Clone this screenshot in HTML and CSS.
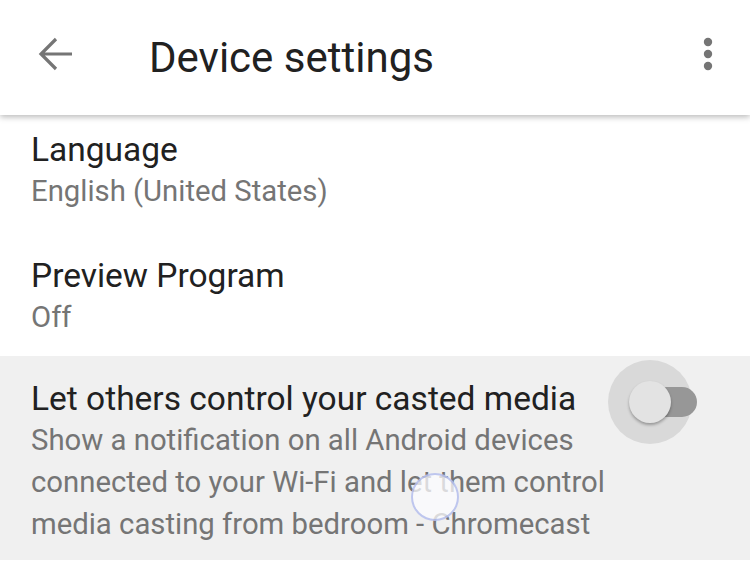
FILE: index.html
```html
<!DOCTYPE html>
<html lang="en">
<head>
    <meta charset="UTF-8">
    <title>Device settings</title>
    <link rel="stylesheet" href="styles.css">
</head>
<body>
<div class="toolbar">
    <svg class="back" width="36" height="36" viewBox="0 0 36 36">
        <path d="M34 18H5M18 3L3 18l15 15" fill="none" stroke="#757575" stroke-width="3.2"/>
    </svg>
    <h1 class="title">Device settings</h1>
    <svg class="more" width="12" height="36" viewBox="0 0 12 36">
        <circle cx="6" cy="6" r="4.2" fill="#757575"/>
        <circle cx="6" cy="18" r="4.2" fill="#757575"/>
        <circle cx="6" cy="30" r="4.2" fill="#757575"/>
    </svg>
</div>

<div class="prefs">
    <div class="pref first">
        <div class="pref-text">
            <div class="pref-title">Language</div>
            <div class="pref-summary">English (United States)</div>
        </div>
    </div>
    <div class="pref second">
        <div class="pref-text">
            <div class="pref-title">Preview Program</div>
            <div class="pref-summary">Off</div>
        </div>
    </div>
    <div class="pref pressed">
        <div class="pref-text">
            <div class="pref-title">Let others control your casted media</div>
            <div class="pref-summary">Show a notification on all Android devices<br>connected to your Wi-Fi and let them control<br>media casting from bedroom - Chromecast</div>
        </div>
        <div class="switch">
            <span class="halo"></span>
            <span class="track"></span>
            <span class="thumb"></span>
        </div>
        <span class="ripple"></span>
    </div>
</div>
</body>
</html>
```

FILE: styles.css
```css
*{
    margin: 0;
    padding: 0;
    box-sizing: border-box;
}
body{
    width: 750px;
    height: 574px;
    overflow: hidden;
    background: #fff;
    font-family: Roboto, "Noto Sans", sans-serif;
}
.toolbar{
    height: 115px;
    display: flex;
    align-items: center;
    padding: 0 24px 0 38px;
    background: #fff;
    box-shadow: 0 2px 6px rgba(0,0,0,0.28);
    position: relative;
    z-index: 2;
}
.back{
    display: block;
    margin-bottom: 7px;
}
.title{
    flex: 1;
    margin-left: 75px;
    font-size: 42px;
    font-weight: 400;
    color: #212121;
}
.more{
    display: block;
    margin: 0 12px 7px 0;
}
.prefs{
    display: flex;
    flex-direction: column;
}
.pref{
    display: flex;
    padding: 23px 31px 21px;
    position: relative;
}
.pref.first{
    padding-top: 15px;
}
.pref.second{
    padding-bottom: 18px;
}
.pref-text{
    flex: 1;
}
.pref-title{
    font-size: 33.5px;
    line-height: 40px;
    color: #212121;
}
.pref-summary{
    font-size: 29.3px;
    line-height: 42px;
    color: #757575;
    white-space: nowrap;
}
.pressed{
    background: #f0f0f0;
    padding-bottom: 15px;
}
/* switch in the off state, with the touch halo around the thumb */
.switch{
    width: 84px;
    height: 84px;
    position: relative;
    margin: -19px 27px 0 0;
}
.halo{
    position: absolute;
    left: 0;
    top: 0;
    width: 84px;
    height: 84px;
    border-radius: 50%;
    background: #d9d9d9;
}
.track{
    position: absolute;
    left: 22px;
    top: 27px;
    width: 67px;
    height: 30px;
    border-radius: 15px;
    background: #979797;
}
.thumb{
    position: absolute;
    left: 21px;
    top: 21px;
    width: 42px;
    height: 42px;
    border-radius: 50%;
    background: #e3e3e3;
    box-shadow: 0 2px 3px rgba(0,0,0,0.3);
}
.ripple{
    position: absolute;
    left: 411px;
    top: 117px;
    width: 48px;
    height: 48px;
    border-radius: 50%;
    background: rgba(252,252,255,0.75);
    border: 2px solid rgba(140,155,225,0.55);
    filter: blur(0.6px);
}
```
